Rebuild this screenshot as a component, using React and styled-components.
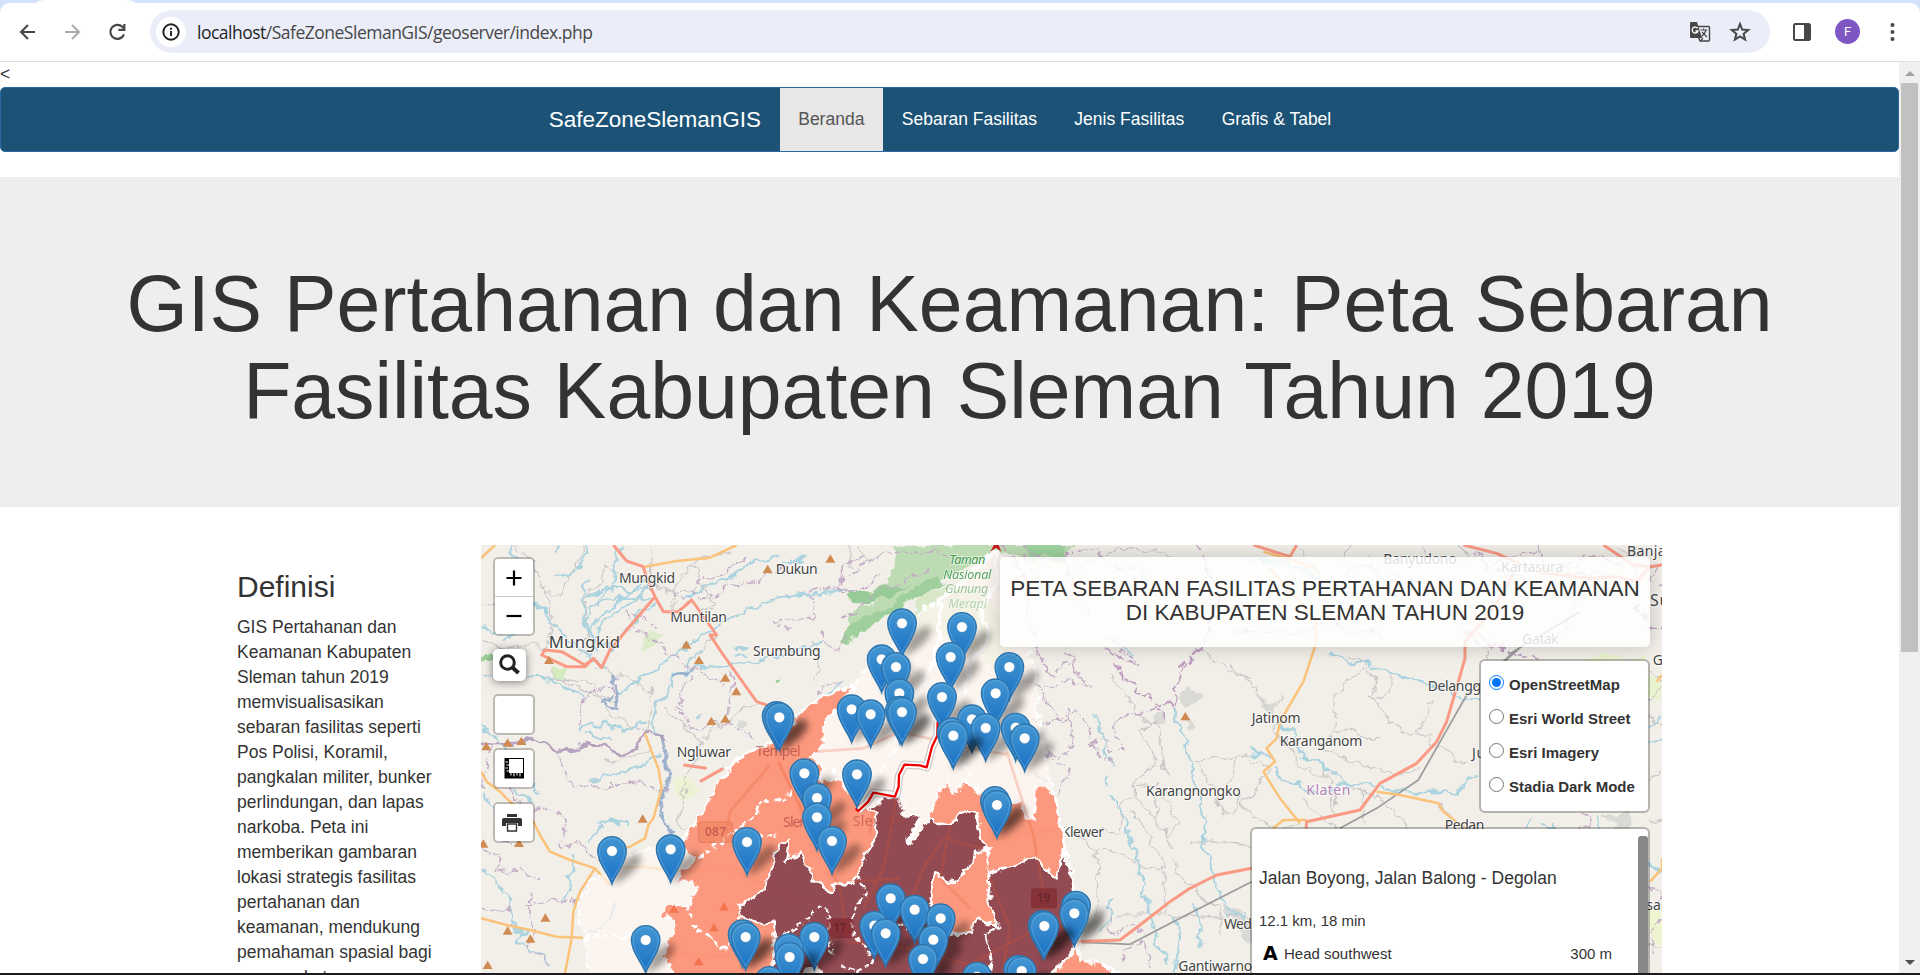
import React from "react";
import styled, { createGlobalStyle } from "styled-components";

const GlobalStyle = createGlobalStyle`
  * { box-sizing: border-box; }
  html, body { margin: 0; padding: 0; background: #fff; }
  body {
    font-family: "Liberation Sans", Arial, sans-serif;
    font-size: 17.5px;
    line-height: 25px;
    color: #333;
    overflow: hidden;
  }
`;

const Screen = styled.div`
  width: 1920px;
  height: 975px;
  display: flex;
  flex-direction: column;
  overflow: hidden;
  border-bottom: 2px solid #1d1b20;
`;

/* ---------- browser chrome ---------- */
const TabStrip = styled.div`
  flex: none;
  height: 3px;
  padding-left: 36px;
  background: #d3e3fd;
`;
const ActiveTab = styled.div`
  width: 99px;
  height: 3px;
  background: #fff;
  border-radius: 10px 10px 0 0 / 3px 3px 0 0;
`;
const ToolbarBack = styled.div`
  flex: none;
  background: #d3e3fd;
`;
const Toolbar = styled.div`
  height: 59px;
  display: flex;
  align-items: center;
  padding: 0 13px 1px 13px;
  background: #fff;
  border-bottom: 1px solid #dcdde0;
  border-radius: 10px 10px 0 0;
`;
const NavIcons = styled.div`
  display: flex;
  gap: 15px;
  width: 137px;
`;
const AddressBar = styled.div`
  flex: none;
  display: flex;
  align-items: center;
  width: 1620px;
  height: 43px;
  padding: 0 19px 0 6px;
  border-radius: 22px;
  background: #ebeef8;
`;
const InfoBadge = styled.div`
  display: flex;
  align-items: center;
  justify-content: center;
  width: 30px;
  height: 30px;
  border-radius: 50%;
  background: #fff;
`;
const Url = styled.div`
  flex: 1;
  margin: 2px 0 0 11px;
  font-family: "Open Sans", "Noto Sans", sans-serif;
  font-size: 17.5px;
  letter-spacing: -0.5px;
  color: #474747;
  b { font-weight: 400; color: #1f1f1f; }
`;
const BarActions = styled.div`
  display: flex;
  align-items: center;
  gap: 18px;
`;
const RightActions = styled.div`
  display: flex;
  align-items: center;
  margin-left: 20px;
  gap: 21px;
`;
const Avatar = styled.div`
  width: 25px;
  height: 25px;
  border-radius: 50%;
  background: #7e57c2;
  color: #fff;
  font: 13px/25px Roboto, sans-serif;
  text-align: center;
`;

/* ---------- viewport ---------- */
const Viewport = styled.div`
  flex: 1;
  min-height: 0;
  display: flex;
`;
const Page = styled.main`
  width: 1899px;
  overflow: hidden;
`;
const ScrollTrack = styled.aside`
  width: 21px;
  display: flex;
  flex-direction: column;
  align-items: center;
  padding: 9px 0 8px;
  background: #f0f0f0;
`;
const ScrollThumb = styled.div`
  width: 17px;
  height: 569px;
  margin: 7px 0 auto;
  background: #c1c1c1;
`;
const Arrow = styled.div`
  width: 0;
  height: 0;
  border: 5px solid transparent;
  border-top-width: ${(p) => (p.$down ? "5px" : "0")};
  border-bottom-width: ${(p) => (p.$down ? "0" : "5px")};
  border-${(p) => (p.$down ? "top" : "bottom")}-color: ${(p) => (p.$down ? "#505050" : "#a3a3a3")};
`;
const Stray = styled.div`
  height: 25px;
  line-height: 25px;
`;
const Navbar = styled.nav`
  display: flex;
  height: 65px;
  padding-left: 529px;
  margin-bottom: 25px;
  background: #1b5275;
  border: 1px solid #2a6aa0;
  border-radius: 5px;
`;
const Brand = styled.div`
  padding: 19px 18.5px 0 18.75px;
  font-size: 22.5px;
  letter-spacing: -0.02px;
  color: #fff;
`;
const NavLink = styled.div`
  padding: 19px 18.7px 0;
  color: ${(p) => (p.$active ? "#555" : "#fff")};
  background: ${(p) => (p.$active ? "#e7e7e7" : "transparent")};
`;
const Hero = styled.header`
  height: 330px;
  padding: 84px 75px 0;
  background: #eee;
  h1 {
    margin: 0;
    font-size: 78.75px;
    font-weight: 400;
    line-height: 86.6px;
    text-align: center;
  }
`;
const Content = styled.section`
  display: flex;
  padding: 38px 0 0 237px;
`;
const Definition = styled.article`
  flex: none;
  width: 244px;
  padding-right: 45px;
  h3 {
    margin: 25px 0 12px;
    font-size: 30px;
    font-weight: 400;
    line-height: 33px;
  }
  p { margin: 0; }
`;
const MapFrame = styled.div`
  position: relative;
  flex: none;
  width: 1181px;
  height: 560px;
  overflow: hidden;
  background: #f2efe9;
`;
const MapSvg = styled.svg`
  display: block;
  width: 1181px;
  height: 428px;
`;
const LeftControls = styled.div`
  position: absolute;
  left: 12px;
  top: 12px;
  display: flex;
  flex-direction: column;
`;
const ControlBox = styled.div`
  display: flex;
  flex-direction: column;
  width: 42px;
  margin-top: ${(p) => p.$gap || 0}px;
  border: 2px solid rgba(0, 0, 0, 0.22);
  border-radius: 5px;
  background-clip: padding-box;
  background-color: #fff;
`;
const ControlButton = styled.div`
  display: flex;
  align-items: center;
  justify-content: center;
  height: ${(p) => p.$h || 37}px;
  & + & { border-top: 1px solid #ccc; }
`;
const SearchButton = styled.div`
  display: flex;
  align-items: center;
  justify-content: center;
  width: 33px;
  height: 32px;
  margin-top: 13px;
  border-radius: 5px;
  background: #fff;
  box-shadow: 0 1px 8px rgba(0, 0, 0, 0.5);
`;
const MapTitle = styled.div`
  position: absolute;
  left: 519px;
  top: 12px;
  width: 650px;
  height: 90px;
  padding-top: 19.5px;
  border-radius: 5px;
  background: rgba(255, 255, 255, 0.83);
  box-shadow: 0 0 19px rgba(0, 0, 0, 0.2);
  font-size: 22.5px;
  line-height: 24.75px;
  text-align: center;
  white-space: nowrap;
`;
const MapPanel = styled.div`
  position: absolute;
  left: ${(p) => p.$left}px;
  top: ${(p) => p.$top}px;
  width: ${(p) => p.$w}px;
  height: ${(p) => p.$h}px;
  border: 2px solid rgba(0, 0, 0, 0.25);
  border-radius: 6px;
  background-color: #fff;
  background-clip: padding-box;
  overflow: hidden;
`;
const LayerList = styled.div`
  display: flex;
  flex-direction: column;
  padding: 5px 0 0 8px;
`;
const LayerRow = styled.label`
  display: flex;
  align-items: center;
  height: 34px;
  font-size: 15px;
  font-weight: 700;
  white-space: nowrap;
  span { margin: 2px 0 0 5px; }
`;
const Radio = styled.i`
  flex: none;
  width: 15px;
  height: 15px;
  margin-top: -2px;
  border-radius: 50%;
  border: ${(p) => (p.$on ? "1.5px solid #0075ff" : "1px solid #767676")};
  padding: 2px;
  background: #fff;
  &::before {
    content: "";
    display: block;
    width: 9px;
    height: 9px;
    border-radius: 50%;
    background: ${(p) => (p.$on ? "#0075ff" : "transparent")};
  }
`;
const Directions = styled.div`
  padding: 37px 0 0 7px;
  font-size: 15px;
  h2 { margin: 0 0 17px; font-size: 17.5px; font-weight: 400; line-height: 25px; }
`;
const Step = styled.div`
  display: flex;
  align-items: center;
  margin-top: 8px;
  width: 353px;
  span { flex: 1; }
  b { width: 25px; padding-left: 4px; font: 900 19px/25px "DejaVu Sans", sans-serif; color: #000; }
`;
const PanelThumb = styled.div`
  position: absolute;
  right: 0;
  top: 7px;
  width: 10px;
  height: 300px;
  border-radius: 3px 3px 0 0;
  background: #888;
`;

/* ---------- map data: map units are a third of a CSS pixel ---------- */
const greens = [
  ["#bedcb4", "M1265 30L1810 30L1785 80L1700 75L1630 60L1570 55L1450 110L1390 150L1330 180L1290 220L1220 240L1150 310L1115 330L1125 290L1150 265L1140 230L1190 210L1240 205L1130 200L1135 165L1200 175L1250 150L1270 90Z"],
  ["#9fcf9d", "M1115 330L1125 285L1160 260L1230 235L1290 195L1330 160L1400 130L1430 140L1340 190L1270 230L1200 270L1160 300Z"],
  ["#96cb98", "M1128 190L1150 165L1200 178L1260 150L1310 155L1270 185L1200 205L1140 200Z"],
  ["#9fd3a0", "M1660 30L1780 30L1782 75L1730 60L1690 65Z"],
  ["#d8e8c8", "M1350 180L1440 150L1540 170L1640 300L1600 420L1500 330L1400 300L1300 290Z"],
  ["#9fcf9d", "M33 360L70 355L90 380L60 385L33 375Z"],
  ["#d4ebc0", "M243 395L285 392L283 425L250 430Z"],
  ["#dcebc8", "M510 320L545 285L580 300L560 330L520 350Z"],
  ["#eef2d4", "M600 750L650 720L690 760L640 800Z"],
  ["#9fcf9d", "M917 432L936 427L930 438L918 441Z"],
  ["#e9f2cf", "M3330 380L3400 350L3440 372L3500 370L3530 440L3576 420L3576 500L3540 480L3530 372Z"],
  ["#eef4cf", "M3536 1120L3576 1130L3576 1220L3536 1200Z"],
  ["#d9d9d6", "M2125 495L2160 460L2187 490L2165 520Z M2050 540L2080 530L2092 560L2065 565Z M2140 560L2155 555L2170 585L2155 588Z"],
  ["#d9d9d6", "M2250 1100L2310 1125L2345 1160L2345 1230L2300 1190Z M3400 840L3480 830L3490 880L3440 890Z M2370 490L2420 500L2410 530L2375 515Z"],
  ["#d9d9d6", "M800 565L830 560L836 572L818 578Z M595 205L618 195L610 222L597 222Z M355 735L385 725L370 748Z"],
];

const waterThin = [
  "M190 195L235 245L285 310L330 345L375 380L400 410", "M350 130L340 200L345 280L370 330L385 360",
  "M360 30L330 90L300 120L255 128", "M460 35L440 90L430 140L380 205L350 250L360 310",
  "M540 130L480 165L440 200L380 250L360 300L380 350", "M540 150L490 200L430 230L390 270L370 330",
  "M550 190L450 185L380 205", "M570 200L520 230L470 285L420 330L400 345", "M545 165L400 160L350 190",
  "M930 60L850 80L780 130L700 160L640 200", "M1160 165L980 175L920 190L880 205L800 240L740 270",
  "M1010 60L940 90L1000 80L960 70", "M740 270L700 300L640 340L590 380L500 440L460 470L440 480",
  "M1060 320L980 340L920 365L860 380L790 395L700 390L680 405L600 425", "M790 338L836 340M795 352L836 360",
  "M690 350L660 360L650 400L605 430L580 490L560 520L550 560L560 600", "M33 420L80 430L160 420L230 430L310 470L360 480",
  "M33 270L90 300L140 285L130 300L100 325", "M330 580L400 570L460 585L530 560", "M345 600L380 605L425 600L430 610",
  "M125 30L120 50L140 80L130 95", "M33 580L80 600L100 640L120 690L180 735L210 770",
  "M120 770L170 780L185 800", "M575 660L540 670L530 690L480 700L440 720L385 725L370 740",
  "M33 775L60 810L90 840L75 880", "M33 1000L70 1030L90 1060L115 1080L125 1100L120 1160L160 1190L150 1220L200 1250L240 1290",
  "M350 920L390 880L380 870L420 860L480 870", "M310 960L300 1040L280 1100", "M360 1200L420 1140L440 1100",
  "M270 30L255 50", "M690 540L680 555", "M1110 440L1090 480L1050 490L1010 530",
  "M1900 300L1940 320L1995 365", "M1875 540L1890 590L1905 645L1925 695", "M1905 730L1912 755",
  "M1920 775L1950 830L1980 890L2000 960L2015 1040L2030 1100L2060 1210L2100 1290", "M1930 1095L1915 1150L1890 1200",
  "M2110 510L2120 560L2145 610L2160 680L2180 760L2200 860L2210 950L2230 1000L2240 1070L2290 1130L2340 1160",
  "M2120 1140L2130 1200L2120 1314", "M2170 1100L2190 1150L2195 1240",
  "M2580 355L2650 380L2700 385L2760 410L2830 440L2900 450L2970 480L3030 500",
  "M2320 60L2400 90L2440 75L2500 110L2560 140", "M2345 640L2390 665M2345 655L2375 660L2400 665", "M2410 560L2470 590L2490 660L2560 690L2600 720L2640 760",
  "M2410 695L2440 730L2500 760L2560 780L2620 745L2700 750L2760 760L2830 775L2900 765L2960 780L2985 730L3030 720",
  "M3210 860L3280 890L3330 910", "M3380 840L3400 900L3450 890", "M3536 580L3576 550M3536 620L3576 610", "M3536 970L3550 1000L3576 1010",
  "M3180 850L3170 890M3360 960L3380 1010", "M2270 1140L2330 1140", "M1700 720L1730 750",
];
const waterWide = [
  ["#8fa6c8", "M605 430L620 415L680 400M440 410L430 450L445 480L435 520L400 510L430 480M560 600L590 640L585 690L600 720L580 770L570 830L605 890L610 900"],
  ["#ab93b5", "M33 628L130 625L190 610L270 645L310 630L400 632L460 660L500 630L530 592L585 615"],
];
const admin = [
  "M820 70L760 120L700 130L670 165L690 185L750 180L780 150L850 140L950 100", "M1180 60L1120 90L1120 150L1140 165L1020 160L1030 210L1035 250L920 260L960 290",
  "M475 230L480 290L530 290L600 350L660 390L720 430L760 450", "M490 235L560 280", "M665 420L640 460L625 520L660 580L740 570L780 560L850 610",
  "M780 410L790 450L770 500L765 540", "M330 570L335 500L360 470L410 450L440 480", "M600 170L650 210",
  "M60 640L50 720L33 760", "M265 640L270 690L310 750L400 760L480 740L550 760L590 770", "M120 680L115 770L170 820L250 820L290 860L275 930L330 920L390 990",
  "M33 940L90 960L80 1000L150 1010L210 1030", "M33 1120L80 1130L130 1125M170 1110L240 1100L310 1100L335 1120M175 1080L185 1180L180 1240L240 1290",
  "M90 920L130 930", "M1050 290L1090 350L1110 350L1130 300M1040 480L1060 450L1110 440",
  "M1135 120L1180 90L1240 60L1360 50L1450 55M1120 100L1110 180L1160 165L1230 120", "M1110 250L1160 230L1210 180L1290 140L1380 100",
  "M1660 30L1720 80L1790 60L1880 40L1930 100L1990 90L2030 120M1590 40L1640 80L1680 160L1670 260L1700 340L1720 380L1740 420",
  "M1785 80L1810 200M1670 60L1700 130", "M1700 350L1750 430L1790 380L1860 450M1700 440L1740 460L1790 440L1845 445L1810 400L1790 330",
  "M1640 440L1710 440L1720 490L1780 560L1820 530L1850 570L1880 640L1920 680M1690 560L1740 570L1790 530L1810 610L1800 660L1720 660",
  "M1730 660L1800 700L1770 750L1760 790M1860 620L1910 620L1920 650L1960 640L1940 600L1930 550L2000 540L2050 520M1940 340L1990 370L2000 390",
  "M1920 1140L1920 1190L2000 1175L2030 1210M1960 1280L1960 1240L2020 1220L2040 1300",
  "M2280 290L2390 290L2430 280L2470 300L2560 270L2650 290L2710 290L2750 310", "M3010 60L3060 90L3140 60L3200 50L3260 120L3390 110L3450 160",
  "M3030 60L3050 100L3100 110", "M3560 90L3540 130L3576 150M3330 840L3360 860L3330 880L3350 910", "M3536 1060L3576 1080L3540 1110M3576 1150L3540 1190L3560 1260",
  "M3200 30L3220 80L3300 100L3350 60L3470 90",
];
const adminBold = [
  "M1940 380L1960 430L2030 480L2070 510L2115 510L2110 450L2160 380L2190 340M1910 340L1960 370L2000 385M2050 510L2090 550",
  "M2125 400L2170 370L2220 290L2215 250L2250 190M2180 30L2250 180", "M2990 290L3080 330L3150 355L3210 370", "M3500 210L3540 270L3576 270",
];
const roadsGray = [
  "M33 320L100 340L180 330L240 340M33 210L90 220M130 30L190 80L230 180L270 180L350 30M395 100L460 120L540 140L600 170L660 90L780 50",
  "M230 180L250 270L240 330M400 80L400 130L345 190L350 310L330 360M240 410L300 450L360 470L430 500M380 400L460 420L545 465L540 560L520 600",
  "M210 430L300 430L370 450L420 540L480 570L520 590M545 30L540 150M660 90L730 200L690 240M700 610L830 520L870 500M590 520L640 570L700 630L650 720L625 870L660 880",
  "M400 680L470 670L540 640M600 200L610 180L720 160M740 290L680 360L640 390M1020 310L1050 350L1040 440",
  "M1140 100L1140 30M1920 410L1960 480L2020 560L2060 570L2060 560L2010 590L2040 650L2070 680L1980 750L1985 750L1985 770L1950 830L1948 890L1900 890",
  "M2060 560L2090 720L2100 730M1980 750L2060 755L2120 860L2100 900L2060 870L2060 770M1990 760L1990 780L2080 880L2110 930",
  "M2170 680L2280 670L2345 660M2165 920L2230 925L2345 930M1820 890L1870 950L1890 980L1880 1140M1870 950L1950 950L1980 980L2050 1000L2080 995L2060 950L1990 830M1940 1140L2090 1140L2080 1000M2100 980L2160 1050L2180 1070L2260 1130L2250 1200",
  "M2180 340L2270 400L2345 440M2190 690L2230 760L2260 840L2290 840L2310 790M2100 1140L2260 1150L2345 1140",
  "M2280 390L2350 460L2400 520M2640 350L2700 400L2640 430L2600 480L2590 600L2520 630M2600 580L2680 600L2720 620M2700 400L2720 500L2760 560L2820 600L2880 600",
  "M2760 420L2760 480L2700 490M2880 500L2870 560L2840 590L2900 640L2980 690L3000 680M2400 570L2460 640L2520 720L2600 720M2560 640L2680 690L2780 720L2850 700",
  "M2500 790L2560 850L2620 900M2310 660L2400 700L2360 760L2310 810L2380 860L2420 870M2490 860L2440 880M2580 780L2600 850M2680 770L2680 860M2640 750L2740 800L2820 880",
  "M2900 800L2950 870M2820 120L2860 180M2700 60L2720 140L2800 200M2860 30L2860 70M3200 330L3280 290L3340 130M3100 110L3240 160L3300 80M2940 240L3030 340",
  "M3010 330L3060 340L3050 370M3440 30L3500 100L3480 180M3536 500L3576 460M3536 400L3576 440M3536 540L3576 580M3536 740L3576 700M3536 860L3576 850M3536 1220L3576 1230M3280 500L3300 660",
  "M2280 930L2345 930M1840 220L1860 240M1820 100L1920 50L2000 40L2100 60M2480 30L2550 130L2560 200L2610 280M2640 100L2720 90L2900 180",
  "M1160 30L1200 90M2420 510L2440 480M2640 30L2620 90L2680 200M2970 30L3000 80M2280 740L2310 660M2560 690L2580 740L2600 820",
];
const railways = ["M3160 330L2990 480L2845 735L2720 820L2610 880", "M1830 1222L1920 1225L1980 1228L2130 1150L2345 1040", "M3330 230L3130 350L3090 390"];
const roadsOrange = [
  "M33 70L75 30M525 95L620 78L720 68L800 30M525 595L545 650L565 700L575 760L550 850L535 870L525 910L480 935L410 950",
  "M33 710L50 740L90 770L120 800L190 860L210 900L240 950L300 975L375 1000L420 1050M375 1000L330 1070L310 1130L305 1210L285 1314",
  "M33 1150L110 1170L180 1185L260 1205L340 1208", "M2535 335L2500 440L2430 560L2420 610L2390 640L2415 680L2380 710L2430 790L2490 865M2535 335L2540 260L2400 100",
  "M2410 880L2440 855L2510 855M2720 770L2790 780L2905 805L2920 830L2985 880", "M2540 100L2480 80L2380 50", "M3576 420L3560 440M3540 1040L3576 1000L3576 970",
  "M410 1000L520 995L640 1010L760 1000L860 1040L940 1080L1110 1110", "M1520 930L1640 900L1780 880M1590 770L1580 820L1480 840",
  "M590 1255L700 1260L880 1265L1100 1260",
];
const roadsRed = [
  "M430 30L470 78L520 95L530 130L555 185L580 230L625 230L665 195L740 300L720 300L760 360L860 500L890 510L925 680L980 800L1010 880",
  "M555 185L470 285L420 345L395 398L370 370L345 395L290 395L215 360L225 345L275 350L345 390L365 375",
  "M2350 30L2460 65L2480 30M2980 30L3080 55L3200 110L3350 130L3440 125L3500 140L3540 95L3576 90",
  "M3400 30L3490 90L3540 95M3130 115L3100 170L3055 240L2985 320L2985 370L2965 440L2930 560L2900 620L2840 685L2730 745L2670 825L2510 860L2508 880",
  "M1810 1220L1950 1215L2010 1170L2100 1100L2160 1060L2240 1020L2345 1000", "M710 700L640 690M690 740L760 700",
];
const regionStroke = "M1578 40L1510 110L1415 190L1360 220L1296 290L1235 370L1180 410L1160 450L1050 490L980 540L930 610L800 670L740 750L700 830L640 915L610 945L545 940L480 965L430 1000L365 1040L325 1110L325 1150L345 1210L355 1314";
const rightEdge = "M1578 40L1610 80L1650 200L1670 320L1700 450L1705 560L1730 700L1760 800L1778 900L1795 985L1820 1070L1840 1140L1830 1220L1828 1280L1890 1285L1945 1314";
const regions = [
  ["#fff5f0", regionStroke + "L355 1360L1945 1360L1945 1314L1890 1285L1828 1280L1830 1220L1840 1140L1820 1070L1795 985L1778 900L1760 800L1730 700L1705 560L1700 450L1670 320L1650 200L1610 80Z"],
  ["#fa8264", "M1160 450L1050 490L980 540L930 610L800 670L740 750L700 830L640 915L650 965L680 975L635 1010L625 1040L665 1040L680 1060L655 1115L590 1105L575 1140L615 1160L600 1210L582 1265L610 1314L610 1360L905 1360L905 1314L915 1220L912 1160L865 1165L815 1145L810 1115L860 1080L885 1060L905 1000L925 930L960 915L950 980L990 955L1025 1000L1025 1035L1085 1070L1100 1045L1140 1050L1160 1020L1185 960L1215 920L1225 840L1190 820L1170 800L1110 740L1050 735L1060 700L1025 665L1060 630L1060 580L1090 530Z"],
  ["#7a2430", "M925 930L960 915L950 980L990 955L1025 1000L1025 1035L1085 1070L1100 1045L1140 1050L1160 1020L1185 960L1215 920L1225 840L1190 820L1240 790L1290 785L1300 840L1350 845L1305 920L1330 925L1380 850L1420 870L1455 860L1470 830L1520 840L1530 910L1560 940L1515 950L1510 990L1470 1010L1465 1045L1395 1020L1380 1110L1450 1200L1490 1200L1520 1150L1585 1180L1545 1200L1565 1280L1550 1314L1550 1360L1060 1360L1060 1314L1040 1290L1000 1314L1000 1360L905 1360L905 1314L915 1220L912 1160L865 1165L815 1145L810 1115L860 1080L885 1060L905 1000Z"],
  ["#fa8264", "M1420 745L1450 775L1485 745L1530 770L1650 805L1670 850L1690 855L1700 755L1745 765L1778 900L1770 1000L1760 1030L1730 1000L1695 965L1610 995L1550 1020L1555 950L1560 940L1530 910L1520 840L1470 830L1455 860L1420 870L1380 845Z"],
  ["#fa8264", "M1515 950L1550 950L1550 1020L1560 1110L1580 1170L1520 1145L1505 1190L1440 1200L1380 1100L1395 1020L1465 1045L1470 1010L1510 990Z"],
  ["#7a2430", "M1555 1010L1610 995L1695 965L1730 1000L1760 1030L1785 950L1820 1080L1840 1140L1810 1235L1790 1275L1750 1300L1740 1360L1550 1360L1565 1280L1545 1200L1585 1180L1560 1110Z"],
  ["#fa8264", "M1828 1235L1828 1280L1890 1285L1945 1314L1945 1360L1750 1360L1750 1314L1795 1275Z"],
];
const innerBorders = [
  "M965 765L940 800L880 795L845 850L800 885L740 930L700 965L650 965", "M810 885L860 900L925 905",
  "M655 1115L670 1170L720 1210L770 1240L790 1190L815 1150", "M345 1205L420 1200L520 1212L600 1220", "M900 1240L920 1220L980 1180L1050 1110L1080 1130L1070 1190L1090 1260",
  "M1160 1020L1190 1070L1150 1130L1145 1200L1180 1220L1210 1280L1160 1314L1110 1290", "M1280 1170L1320 1160L1310 1195",
  "M1400 230L1410 300L1380 400L1350 470L1300 560L1270 650L1230 710L1190 750L1170 800",
  "M1085 700L1110 720L1110 740", "M1480 690L1500 710L1490 745",
];
const regionRoads = [
  "M1035 650L1180 640L1290 590L1500 640L1620 660", "M1290 700L1270 850L1240 1000L1180 1120", "M1420 910L1360 1000L1300 1150M1420 910L1540 940M1610 650L1690 900L1720 1070",
  "M900 690L780 830L770 900M925 680L1110 1060L1130 1200M1150 1040L1290 1030", "M1210 820L1200 900M1440 870L1410 1030L1500 1120M1560 1030L1620 1180L1600 1300", "M1130 1220L1320 1240L1500 1290L1700 1180L1830 1130",
];
const peaks = [[893, 103], [1081, 72], [649, 330], [687, 376], [766, 429], [799, 470], [766, 552], [724, 559], [237, 376], [49, 635], [113, 624], [154, 619], [518, 852], [147, 925], [40, 927], [226, 1149], [113, 1188], [181, 1212], [53, 1291], [2146, 545]];
const redPeaks = [[612, 1122], [762, 1116], [732, 1178], [686, 1280]];
const labels = [
  ["Mungkid", 447, 143, 168], ["Muntilan", 601, 261, 170], ["Mungkid", 236, 339, 214, 50], ["Dukun", 917, 118, 126], ["Srumbung", 849, 363, 203],
  ["Ngluwar", 620, 665, 163], ["Klewer", 1775, 905, 127], ["Karangnongko", 2028, 782, 284], ["Jatinom", 2345, 564, 147], ["Karanganom", 2429, 633, 248],
  ["Delanggu", 2873, 467, 185], ["Juwiring", 3006, 668, 175], ["Pedan", 2924, 884, 119], ["Wedi", 2262, 1182, 92], ["Gantiwarno", 2125, 1309, 222],
  ["Banyudono", 2740, 87, 220], ["Kartasura", 3094, 112, 185], ["Gatak", 3156, 328, 110], ["Banjarsari", 3471, 64, 210], ["Grogol", 3548, 389, 140],
  ["Surakarta", 3540, 212, 235, 48], ["Pasar", 3480, 1126, 110],
];
const markers = [
  [1296, 265], [1476, 276], [1442, 366], [1235, 373], [1278, 396], [1618, 396], [1577, 475], [1288, 475], [1416, 486], [1145, 523], [1202, 538],
  [1290, 527], [1296, 531], [920, 543], [928, 547], [1506, 553], [1547, 579], [1637, 578], [1445, 592], [1450, 602], [1664, 610], [1003, 715], [1161, 718],
  [1041, 789], [1575, 798], [1581, 810], [1041, 847], [1086, 918], [831, 921], [602, 943], [426, 948], [1262, 1090], [1818, 1112], [1334, 1124], [1813, 1135],
  [1412, 1150], [1213, 1172], [1718, 1170], [1723, 1173], [1247, 1195], [818, 1198], [827, 1206], [1033, 1206], [1390, 1214], [527, 1215],
  [957, 1240], [959, 1266], [1359, 1272], [1645, 1304], [1655, 1308], [1521, 1325], [898, 1338],
];

function Lines({ paths, ...rest }) {
  return <path d={paths.join("")} fill="none" strokeLinejoin="round" {...rest} />;
}

function MapDrawing() {
  return (
    <MapSvg viewBox="33 30 3543 1284" preserveAspectRatio="none">
      <defs>
        <filter id="rough" x="0" y="0" width="3600" height="1400" filterUnits="userSpaceOnUse" colorInterpolationFilters="sRGB">
          <feTurbulence type="fractalNoise" baseFrequency="0.024" numOctaves="3" seed="7" />
          <feDisplacementMap in="SourceGraphic" scale="42" xChannelSelector="R" yChannelSelector="G" />
        </filter>
        <filter id="edge" x="0" y="-40" width="3600" height="1440" filterUnits="userSpaceOnUse" colorInterpolationFilters="sRGB">
          <feTurbulence type="fractalNoise" baseFrequency="0.034" numOctaves="2" seed="3" />
          <feDisplacementMap in="SourceGraphic" scale="30" xChannelSelector="R" yChannelSelector="G" />
        </filter>
        <filter id="soft" x="-50%" y="-50%" width="200%" height="200%"><feGaussianBlur stdDeviation="11" /></filter>
        <linearGradient id="pin" x1="0" y1="0" x2="0" y2="1">
          <stop offset="0" stopColor="#4397d2" /><stop offset="1" stopColor="#1a70c4" />
        </linearGradient>
        <g id="marker">
          <path d="M0 102L22 40L70 8Q95 12 82 38Q60 75 0 102Z" fill="#000" opacity="0.36" filter="url(#soft)" />
          <path d="M0 100C-8 72-43 38-43 0A43 43 0 1 1 43 0C43 38 8 72 0 100Z" fill="url(#pin)" stroke="#2f75ad" strokeWidth="4" />
          <path d="M0 88C-8 66-38 34-38 0A38 38 0 1 1 38 0C38 34 8 66 0 88Z" fill="none" stroke="#6db1e1" strokeWidth="2.5" opacity="0.65" />
          <circle r="16" fill="#fff" stroke="#3b7fb5" strokeWidth="1.5" />
        </g>
      </defs>
      <rect x="33" y="30" width="3543" height="1284" fill="#f2efe9" />
      <g filter="url(#rough)">
        {greens.map(([c, d]) => <path key={d} d={d} fill={c} />)}
        <Lines paths={roadsGray} stroke="#c9c7c7" strokeWidth="3.5" />
        <Lines paths={waterThin} stroke="#aad3df" strokeWidth="6.5" />
        {waterWide.map(([c, d]) => <path key={d} d={d} fill="none" stroke={c} strokeWidth="9" opacity="0.85" />)}
        <Lines paths={admin} stroke="#c3abc6" strokeWidth="5" strokeDasharray="20 6 4 6" />
        <Lines paths={adminBold} stroke="#bf9fc0" strokeWidth="7" strokeDasharray="26 8" />
      </g>
      <Lines paths={railways} stroke="#9b9b9b" strokeWidth="5" />
      <Lines paths={roadsOrange} stroke="#fbc27a" strokeWidth="7.5" />
      <Lines paths={roadsRed} stroke="#fa9a85" strokeWidth="9" />
      <g fill="#cf8b52">
        {peaks.map(([x, y]) => <path key={`${x}-${y}`} d={`M${x} ${y - 14}l15 25h-30z`} />)}
      </g>
      <g fontFamily="'Noto Sans', sans-serif" fill="#444" stroke="#fff" strokeOpacity="0.75" strokeWidth="6" paintOrder="stroke" strokeLinejoin="round">
        {labels.map(([t, x, y, w, size]) => (
          <text key={t + x} x={x} y={y} fontSize={size || 42} textLength={w}>{t}</text>
        ))}
        <text x="2509" y="780" fontSize="42" textLength="132" fill="#b283b5">Klaten</text>
      </g>
      <g filter="url(#edge)">
        {regions.map(([c, d], i) => <path key={i} d={d} fill={c} fillOpacity={i ? 0.82 : 0.72} />)}
        <Lines paths={[regionStroke, rightEdge, ...innerBorders]} stroke="#fff" strokeWidth="7.5" strokeDasharray="18 9" />
        {regions.slice(1).map(([, d], i) => <path key={i} d={d} fill="none" stroke="#fff" strokeWidth="6.5" strokeDasharray="22 8" />)}
        <path d="M1578 45L1578 150L1530 220L1555 300L1500 400L1480 480M1575 45L1500 120L1410 195L1410 300L1380 400L1350 470M1350 850L1315 920" fill="none" stroke="#fff" strokeWidth="10" />
      </g>
      <g fontFamily="'Noto Sans', sans-serif" fill="#3f9950" fontStyle="italic" fontSize="38" stroke="#fff" strokeOpacity="0.6" strokeWidth="5" paintOrder="stroke">
        <text x="1438" y="87" textLength="108">Taman</text>
        <text x="1420" y="131" textLength="144" opacity="0.85">Nasional</text>
        <text x="1425" y="175" textLength="130" opacity="0.5">Gunung</text>
        <text x="1435" y="220" textLength="116" opacity="0.35">Merapi</text>
      </g>
      <Lines paths={regionRoads} stroke="#e8552f" strokeOpacity="0.22" strokeWidth="8" />
      <g fill="#f3754f">
        {redPeaks.map(([x, y]) => <path key={x} d={`M${x} ${y - 14}l15 25h-30z`} />)}
      </g>
      <g fontFamily="'Noto Sans', sans-serif" fontSize="42" fill="#a53b38" opacity="0.62">
        <text x="858" y="664" textLength="134">Tempel</text>
        <text x="940" y="875" textLength="130">Sleman</text>
        <text x="1148" y="872" textLength="152" opacity="0.8">Sleman</text>
        <g fontSize="36" fontWeight="600">
          <rect x="686" y="861" width="101" height="61" rx="8" fill="#f08563" stroke="#d76b4a" strokeWidth="3" />
          <text x="705" y="903" textLength="63">087</text>
          <rect x="1683" y="1060" width="78" height="60" rx="8" fill="#812229" />
          <text x="1700" y="1102" textLength="41" fill="#4f1018">19</text>
          <rect x="1072" y="1150" width="76" height="60" rx="8" fill="#812229" />
          <text x="1090" y="1192" textLength="39" fill="#4f1018">17</text>
        </g>
      </g>
      <path d="M1561 50L1572 30H1586L1594 50L1578 38Z" fill="#cc141c" />
      <g fill="none" strokeLinejoin="round">
        <path d="M1403 560L1402 602L1386 635L1370 697L1350 691L1303 689L1287 723L1280 780L1210 773L1192 800L1165 828" stroke="#aaa" strokeOpacity="0.55" strokeWidth="25" />
        <path d="M1403 560L1402 602L1386 635L1370 697L1350 691L1303 689L1287 723L1280 780L1210 773L1192 800L1165 828" stroke="#fff" strokeWidth="17" />
        <path d="M1403 560L1402 602L1386 635L1370 697L1350 691L1303 689L1287 720L1286 755L1275 785L1210 773L1195 800L1165 828L1157 820" stroke="#f00000" strokeWidth="7" />
      </g>
      {markers.map(([x, y]) => <use key={`${x}-${y}`} href="#marker" x={x} y={y} />)}
    </MapSvg>
  );
}

const iconProps = { fill: "none", stroke: "#474747", strokeWidth: 2 };
const layers = ["OpenStreetMap", "Esri World Street", "Esri Imagery", "Stadia Dark Mode"];

function BrowserChrome() {
  return (
    <>
      <TabStrip><ActiveTab /></TabStrip>
      <ToolbarBack>
        <Toolbar>
          <NavIcons>
            <svg width="30" height="30" viewBox="0 0 30 30" {...iconProps}><path d="M22 15H8.5M15 8L8 15L15 22" /></svg>
            <svg width="30" height="30" viewBox="0 0 30 30" {...iconProps} stroke="#ababab"><path d="M7 15H20.5M14 8L21 15L14 22" /></svg>
            <svg width="30" height="30" viewBox="0 0 30 30" {...iconProps} strokeWidth="2.2"><path d="M21 17.3A7 7 0 1 1 19.3 9.8L21.5 12" /><path d="M21.3 7V12.8H15.4" /></svg>
          </NavIcons>
          <AddressBar>
            <InfoBadge>
              <svg width="18" height="18" viewBox="0 0 18 18"><circle cx="9" cy="9" r="7.7" fill="none" stroke="#1f1f1f" strokeWidth="1.9" /><path d="M9 8V13M9 4.8V6.7" stroke="#1f1f1f" strokeWidth="1.9" /></svg>
            </InfoBadge>
            <Url><b>localhost</b>/SafeZoneSlemanGIS/geoserver/index.php</Url>
            <BarActions>
              <svg width="22" height="22" viewBox="0 0 22 22">
                <path d="M9 5.5H19.5Q20.5 5.5 20.5 6.5V19Q20.5 20 19.5 20H11L9 15" fill="none" stroke="#474747" strokeWidth="1.4" />
                <path d="M2 1H8L13 17H2Q1 17 1 16V2Q1 1 2 1Z" fill="#474747" />
                <path d="M8.7 7.4A3 3 0 1 0 9 10H6.5" fill="none" stroke="#fff" strokeWidth="1.3" />
                <path d="M11.5 9H18.5M14.5 7.5V9M17 9Q16 13 12.5 15.5M13 11L18 16M11.5 20L14 17" fill="none" stroke="#474747" strokeWidth="1.2" />
              </svg>
              <svg width="22" height="22" viewBox="0 0 22 22"><path d="M11 3L13.2 8.6L19.2 9L14.6 12.8L16.1 18.6L11 15.4L5.9 18.6L7.4 12.8L2.8 9L8.8 8.6Z" fill="none" stroke="#474747" strokeWidth="2" /></svg>
            </BarActions>
          </AddressBar>
          <RightActions>
            <svg width="24" height="24" viewBox="0 0 24 24"><rect x="4" y="4" width="16" height="16" rx="1.5" fill="none" stroke="#474747" strokeWidth="2" /><path d="M14 4H20V20H14Z" fill="#474747" /></svg>
            <Avatar>F</Avatar>
            <svg width="24" height="24" viewBox="0 0 24 24" fill="#474747"><circle cx="11.5" cy="5" r="2" /><circle cx="11.5" cy="12" r="2" /><circle cx="11.5" cy="19" r="2" /></svg>
          </RightActions>
        </Toolbar>
      </ToolbarBack>
    </>
  );
}

function MapControls() {
  return (
    <LeftControls>
      <ControlBox>
        <ControlButton $h={37}><svg width="16" height="16" viewBox="0 0 16 16"><path d="M8 .5V15.5M.5 8H15.5" stroke="#000" strokeWidth="2.2" /></svg></ControlButton>
        <ControlButton $h={38}><svg width="16" height="16" viewBox="0 0 16 16"><path d="M.5 8H15.5" stroke="#000" strokeWidth="2.2" /></svg></ControlButton>
      </ControlBox>
      <SearchButton>
        <svg width="22" height="22" viewBox="0 0 22 22" fill="none" stroke="#222"><circle cx="8.5" cy="8.5" r="6.8" strokeWidth="3" /><path d="M13.5 13.5L19.5 19" strokeWidth="4" /></svg>
      </SearchButton>
      <ControlBox $gap={13}><ControlButton /></ControlBox>
      <ControlBox $gap={13}>
        <ControlButton>
          <svg width="21" height="21" viewBox="0 0 21 21"><path d="M.5 0H20V1H5V15H20V20.5H.5Z" fill="#000" /><path d="M19.5 0V15" stroke="#000" /><path d="M1.5 4H4M2.5 7H5M1.5 10H4M2.5 13H5M7 15V17.5M10 15V18.5M13 15V17.5M16 15V18.5" stroke="#fff" /></svg>
        </ControlButton>
      </ControlBox>
      <ControlBox $gap={13}>
        <ControlButton>
          <svg width="26" height="20" viewBox="0 0 26 20"><path d="M6 1H16V4H6ZM3 5H19Q21 5 21 7V13H17V10H5V13H1V7Q1 5 3 5Z" fill="#333" /><path d="M6.5 11H15.5V18H6.5Z" fill="#fff" stroke="#333" strokeWidth="1.4" /></svg>
        </ControlButton>
      </ControlBox>
    </LeftControls>
  );
}

export default function App() {
  return (
    <Screen>
      <GlobalStyle />
      <BrowserChrome />
      <Viewport>
        <Page>
          <Stray>&lt;</Stray>
          <Navbar>
            <Brand>SafeZoneSlemanGIS</Brand>
            <NavLink $active>Beranda</NavLink>
            <NavLink>Sebaran Fasilitas</NavLink>
            <NavLink>Jenis Fasilitas</NavLink>
            <NavLink>Grafis &amp; Tabel</NavLink>
          </Navbar>
          <Hero>
            <h1>GIS Pertahanan dan Keamanan: Peta Sebaran Fasilitas Kabupaten Sleman Tahun 2019</h1>
          </Hero>
          <Content>
            <Definition>
              <h3>Definisi</h3>
              <p>
                GIS Pertahanan dan Keamanan Kabupaten Sleman tahun 2019 memvisualisasikan sebaran fasilitas seperti Pos
                Polisi, Koramil, pangkalan militer, bunker perlindungan, dan lapas narkoba. Peta ini memberikan gambaran
                lokasi strategis fasilitas pertahanan dan keamanan, mendukung pemahaman spasial bagi masyarakat umum,
                peneliti
              </p>
            </Definition>
            <MapFrame>
              <MapDrawing />
              <MapControls />
              <MapTitle>
                PETA SEBARAN FASILITAS PERTAHANAN DAN KEAMANAN<br />DI KABUPATEN SLEMAN TAHUN 2019
              </MapTitle>
              <MapPanel $left={998} $top={114} $w={171} $h={154}>
                <LayerList>
                  {layers.map((name, i) => (
                    <LayerRow key={name}><Radio $on={i === 0} /><span>{name}</span></LayerRow>
                  ))}
                </LayerList>
              </MapPanel>
              <MapPanel $left={769} $top={282} $w={400} $h={320}>
                <Directions>
                  <h2>Jalan Boyong, Jalan Balong - Degolan</h2>
                  <div>12.1 km, 18 min</div>
                  <Step><b>A</b><span>Head southwest</span>300 m</Step>
                </Directions>
                <PanelThumb />
              </MapPanel>
            </MapFrame>
          </Content>
        </Page>
        <ScrollTrack><Arrow /><ScrollThumb /><Arrow $down /></ScrollTrack>
      </Viewport>
    </Screen>
  );
}
